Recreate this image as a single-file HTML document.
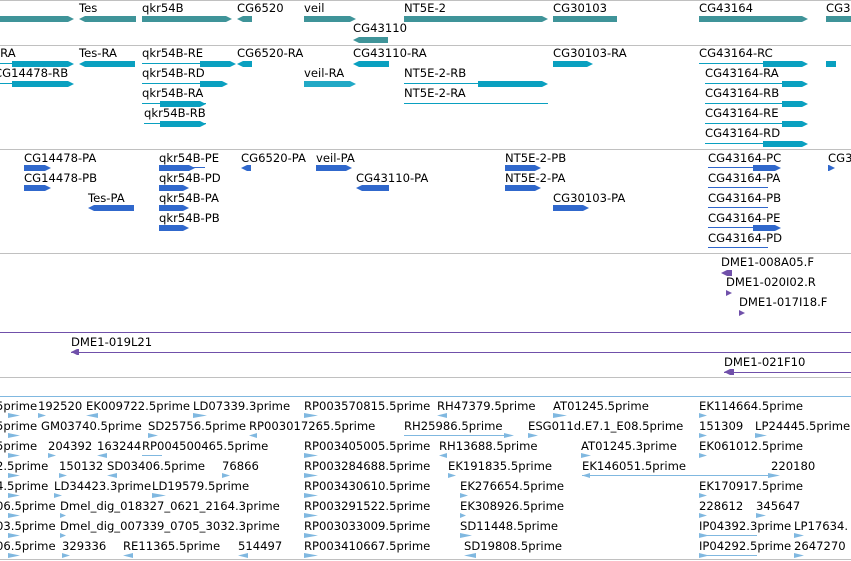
<!DOCTYPE html>
<html><head><meta charset="utf-8"><style>
body{margin:0;width:851px;height:561px;overflow:hidden;background:#fff;position:relative;font-family:"DejaVu Sans","Liberation Sans",sans-serif}
.t{position:absolute;font-size:11.6px;line-height:14px;white-space:nowrap;color:#000;margin-top:1px}
.b{position:absolute;height:6px}
.g{background:#3f9499}.r{background:#0aa0c0}.p{background:#3068cc}.c{background:#7050aa}.e{background:#80b8e0}
.h{position:absolute;height:1px}
.ar{clip-path:polygon(0 0,calc(100% - 6px) 0,100% 50%,calc(100% - 6px) 100%,0 100%)}
.al{clip-path:polygon(6px 0,100% 0,100% 100%,6px 100%,0 50%)}
.s{position:absolute;height:5px;width:8px;background:#80b8e0;clip-path:polygon(0 0,100% 50%,0 100%)}
.sl{position:absolute;height:5px;width:8px;background:#80b8e0;clip-path:polygon(100% 0,0 50%,100% 100%)}
</style></head><body>
<div class="h" style="top:0;left:0;width:851px;background:#c0c0c0"></div>
<div class="h" style="top:45px;left:0;width:851px;background:#c0c0c0"></div>
<div class="h" style="top:149px;left:0;width:851px;background:#c0c0c0"></div>
<div class="h" style="top:253px;left:0;width:851px;background:#c0c0c0"></div>
<div class="h" style="top:332px;left:0;width:851px;background:#7050aa"></div>
<div class="h" style="top:377px;left:0;width:851px;background:#c0c0c0"></div>
<div class="h" style="top:396px;left:0;width:851px;background:#80b8e0"></div>
<div class="h" style="top:559px;left:0;width:851px;background:#c0c0c0"></div>

<!-- genes -->
<div class="t" style="left:79px;top:0">Tes</div><div class="t" style="left:142px;top:0">qkr54B</div><div class="t" style="left:237px;top:0">CG6520</div><div class="t" style="left:304px;top:0">veil</div><div class="t" style="left:404px;top:0">NT5E-2</div><div class="t" style="left:553px;top:0">CG30103</div><div class="t" style="left:699px;top:0">CG43164</div><div class="t" style="left:826px;top:0">CG3</div>
<div class="t" style="left:353px;top:20px">CG43110</div>
<div class="b g ar" style="left:0;top:16px;width:74px"></div><div class="b g al" style="left:79px;top:16px;width:57px"></div><div class="b g ar" style="left:142px;top:16px;width:90px"></div><div class="b g al" style="left:237px;top:16px;width:15px"></div><div class="b g ar" style="left:304px;top:16px;width:52px"></div><div class="b g ar" style="left:404px;top:16px;width:144px"></div><div class="b g" style="left:553px;top:16px;width:64px"></div><div class="b g ar" style="left:699px;top:16px;width:109px"></div><div class="b g" style="left:826px;top:16px;width:25px"></div>
<div class="b g al" style="left:353px;top:37px;width:35px"></div>

<!-- transcripts -->
<div class="t" style="left:-4px;top:45px">-RA</div><div class="t" style="left:79px;top:45px">Tes-RA</div><div class="t" style="left:142px;top:45px">qkr54B-RE</div><div class="t" style="left:237px;top:45px">CG6520-RA</div><div class="t" style="left:353px;top:45px">CG43110-RA</div><div class="t" style="left:553px;top:45px">CG30103-RA</div><div class="t" style="left:699px;top:45px">CG43164-RC</div>
<div class="h r" style="left:0;top:63px;width:12px"></div><div class="b r ar" style="left:12px;top:61px;width:62px"></div><div class="b r al" style="left:79px;top:61px;width:56px"></div><div class="h r" style="left:142px;top:63px;width:60px"></div><div class="b r ar" style="left:200px;top:61px;width:36px"></div><div class="b r al" style="left:237px;top:61px;width:15px"></div><div class="b r al" style="left:353px;top:61px;width:36px"></div><div class="b r ar" style="left:553px;top:61px;width:40px"></div><div class="h r" style="left:699px;top:63px;width:80px"></div><div class="b r ar" style="left:763px;top:61px;width:45px"></div><div class="b r" style="left:826px;top:61px;width:10px"></div>
<div class="t" style="left:-6px;top:65px">CG14478-RB</div><div class="t" style="left:142px;top:65px">qkr54B-RD</div><div class="t" style="left:304px;top:65px">veil-RA</div><div class="t" style="left:404px;top:65px">NT5E-2-RB</div><div class="t" style="left:705px;top:65px">CG43164-RA</div>
<div class="h r" style="left:0;top:83px;width:12px"></div><div class="b r ar" style="left:12px;top:81px;width:62px"></div><div class="h r" style="left:142px;top:83px;width:60px"></div><div class="b r ar" style="left:200px;top:81px;width:28px"></div><div class="b r ar" style="left:304px;top:81px;width:52px;opacity:.9"></div><div class="h r" style="left:404px;top:83px;width:100px"></div><div class="b r ar" style="left:478px;top:81px;width:70px"></div><div class="h r" style="left:705px;top:83px;width:80px"></div><div class="b r ar" style="left:782px;top:81px;width:26px"></div>
<div class="t" style="left:142px;top:85px">qkr54B-RA</div><div class="t" style="left:404px;top:85px">NT5E-2-RA</div><div class="t" style="left:705px;top:85px">CG43164-RB</div>
<div class="h r" style="left:142px;top:103px;width:64px"></div><div class="b r ar" style="left:160px;top:101px;width:46px"></div><div class="h r" style="left:404px;top:103px;width:144px"></div><div class="h r" style="left:705px;top:103px;width:80px"></div><div class="b r ar" style="left:782px;top:101px;width:26px"></div>
<div class="t" style="left:144px;top:105px">qkr54B-RB</div><div class="t" style="left:705px;top:105px">CG43164-RE</div>
<div class="h r" style="left:144px;top:123px;width:62px"></div><div class="b r ar" style="left:160px;top:121px;width:46px"></div><div class="h r" style="left:705px;top:123px;width:80px"></div><div class="b r ar" style="left:782px;top:121px;width:26px"></div>
<div class="t" style="left:705px;top:125px">CG43164-RD</div>
<div class="h r" style="left:705px;top:143px;width:60px"></div><div class="b r ar" style="left:763px;top:141px;width:45px"></div>

<!-- proteins -->
<div class="t" style="left:24px;top:150px">CG14478-PA</div><div class="t" style="left:159px;top:150px">qkr54B-PE</div><div class="t" style="left:241px;top:150px">CG6520-PA</div><div class="t" style="left:316px;top:150px">veil-PA</div><div class="t" style="left:505px;top:150px">NT5E-2-PB</div><div class="t" style="left:708px;top:150px">CG43164-PC</div><div class="t" style="left:828px;top:150px">CG3</div>
<div class="b p ar" style="left:24px;top:165px;width:27px"></div><div class="h p" style="left:159px;top:167px;width:46px"></div><div class="b p ar" style="left:159px;top:165px;width:36px"></div><div class="b p al" style="left:241px;top:165px;width:10px"></div><div class="b p ar" style="left:316px;top:165px;width:36px"></div><div class="b p ar" style="left:505px;top:165px;width:36px"></div><div class="h p" style="left:708px;top:167px;width:60px"></div><div class="b p ar" style="left:753px;top:165px;width:28px"></div><div class="b p ar" style="left:828px;top:165px;width:7px"></div>
<div class="t" style="left:24px;top:170px">CG14478-PB</div><div class="t" style="left:159px;top:170px">qkr54B-PD</div><div class="t" style="left:356px;top:170px">CG43110-PA</div><div class="t" style="left:505px;top:170px">NT5E-2-PA</div><div class="t" style="left:708px;top:170px">CG43164-PA</div>
<div class="b p ar" style="left:24px;top:185px;width:27px"></div><div class="b p ar" style="left:159px;top:185px;width:30px"></div><div class="b p al" style="left:356px;top:185px;width:33px"></div><div class="b p ar" style="left:505px;top:185px;width:36px"></div><div class="h p" style="left:708px;top:187px;width:60px"></div>
<div class="t" style="left:88px;top:190px">Tes-PA</div><div class="t" style="left:159px;top:190px">qkr54B-PA</div><div class="t" style="left:553px;top:190px">CG30103-PA</div><div class="t" style="left:708px;top:190px">CG43164-PB</div>
<div class="b p al" style="left:88px;top:205px;width:46px"></div><div class="b p ar" style="left:159px;top:205px;width:30px"></div><div class="b p ar" style="left:553px;top:205px;width:36px"></div><div class="h p" style="left:708px;top:207px;width:60px"></div>
<div class="t" style="left:159px;top:210px">qkr54B-PB</div><div class="t" style="left:708px;top:210px">CG43164-PE</div>
<div class="b p ar" style="left:159px;top:225px;width:30px"></div><div class="h p" style="left:708px;top:227px;width:60px"></div><div class="b p ar" style="left:753px;top:225px;width:28px"></div>
<div class="t" style="left:708px;top:230px">CG43164-PD</div>
<div class="h p" style="left:708px;top:247px;width:60px"></div>

<!-- clones -->
<div class="t" style="left:721px;top:254px">DME1-008A05.F</div><div class="b c al" style="left:721px;top:270px;width:11px"></div>
<div class="t" style="left:726px;top:274px">DME1-020I02.R</div><div class="b c ar" style="left:726px;top:290px;width:6px"></div>
<div class="t" style="left:739px;top:294px">DME1-017I18.F</div><div class="b c ar" style="left:739px;top:310px;width:6px"></div>
<div class="t" style="left:71px;top:334px">DME1-019L21</div><div class="h c" style="left:71px;top:352px;width:780px"></div><div class="b c al" style="left:71px;top:349px;width:8px"></div>
<div class="t" style="left:724px;top:354px">DME1-021F10</div><div class="h c" style="left:724px;top:372px;width:127px"></div><div class="b c al" style="left:724px;top:369px;width:10px"></div>

<!-- ESTs -->
<div class="t" style="left:-4px;top:398px">5prime</div><div class="t" style="left:38px;top:398px">192520</div><div class="t" style="left:86px;top:398px">EK009722.5prime</div><div class="t" style="left:193px;top:398px">LD07339.3prime</div><div class="t" style="left:304px;top:398px">RP003570815.5prime</div><div class="t" style="left:437px;top:398px">RH47379.5prime</div><div class="t" style="left:553px;top:398px">AT01245.5prime</div><div class="t" style="left:699px;top:398px">EK114664.5prime</div>
<div class="t" style="left:-4px;top:418px">5prime</div><div class="t" style="left:41px;top:418px">GM03740.5prime</div><div class="t" style="left:148px;top:418px">SD25756.5prime</div><div class="t" style="left:249px;top:418px">RP003017265.5prime</div><div class="t" style="left:404px;top:418px">RH25986.5prime</div><div class="t" style="left:528px;top:418px">ESG011d.E7.1_E08.5prime</div><div class="t" style="left:699px;top:418px">151309</div><div class="t" style="left:755px;top:418px">LP24445.5prime</div>
<div class="t" style="left:-4px;top:438px">5prime</div><div class="t" style="left:48px;top:438px">204392</div><div class="t" style="left:97px;top:438px">163244</div><div class="t" style="left:142px;top:438px">RP004500465.5prime</div><div class="t" style="left:304px;top:438px">RP003405005.5prime</div><div class="t" style="left:439px;top:438px">RH13688.5prime</div><div class="t" style="left:581px;top:438px">AT01245.3prime</div><div class="t" style="left:699px;top:438px">EK061012.5prime</div>
<div class="t" style="left:-4px;top:458px">2.5prime</div><div class="t" style="left:59px;top:458px">150132</div><div class="t" style="left:107px;top:458px">SD03406.5prime</div><div class="t" style="left:222px;top:458px">76866</div><div class="t" style="left:304px;top:458px">RP003284688.5prime</div><div class="t" style="left:448px;top:458px">EK191835.5prime</div><div class="t" style="left:582px;top:458px">EK146051.5prime</div><div class="t" style="left:771px;top:458px">220180</div>
<div class="t" style="left:-4px;top:478px">4.5prime</div><div class="t" style="left:54px;top:478px">LD34423.3prime</div><div class="t" style="left:152px;top:478px">LD19579.5prime</div><div class="t" style="left:304px;top:478px">RP003430610.5prime</div><div class="t" style="left:460px;top:478px">EK276654.5prime</div><div class="t" style="left:699px;top:478px">EK170917.5prime</div>
<div class="t" style="left:-4px;top:498px">06.5prime</div><div class="t" style="left:60px;top:498px">Dmel_dig_018327_0621_2164.3prime</div><div class="t" style="left:304px;top:498px">RP003291522.5prime</div><div class="t" style="left:460px;top:498px">EK308926.5prime</div><div class="t" style="left:699px;top:498px">228612</div><div class="t" style="left:756px;top:498px">345647</div>
<div class="t" style="left:-4px;top:518px">03.5prime</div><div class="t" style="left:60px;top:518px">Dmel_dig_007339_0705_3032.3prime</div><div class="t" style="left:304px;top:518px">RP003033009.5prime</div><div class="t" style="left:460px;top:518px">SD11448.5prime</div><div class="t" style="left:699px;top:518px">IP04392.3prime</div><div class="t" style="left:794px;top:518px">LP17634.</div>
<div class="t" style="left:-4px;top:538px">06.5prime</div><div class="t" style="left:62px;top:538px">329336</div><div class="t" style="left:123px;top:538px">RE11365.5prime</div><div class="t" style="left:238px;top:538px">514497</div><div class="t" style="left:304px;top:538px">RP003410667.5prime</div><div class="t" style="left:464px;top:538px">SD19808.5prime</div><div class="t" style="left:699px;top:538px">IP04292.5prime</div><div class="t" style="left:794px;top:538px">2647270</div>

<!-- EST glyphs -->
<div class="s" style="left:8px;top:413px;width:12px"></div><div class="s" style="left:38px;top:413px"></div><div class="sl" style="left:86px;top:413px;width:12px"></div><div class="s" style="left:193px;top:413px;width:14px"></div><div class="s" style="left:304px;top:413px;width:14px"></div><div class="sl" style="left:437px;top:413px;width:10px"></div><div class="s" style="left:553px;top:413px;width:14px"></div><div class="s" style="left:699px;top:413px"></div>
<div class="s" style="left:8px;top:433px;width:12px"></div><div class="s" style="left:148px;top:433px;width:10px"></div><div class="sl" style="left:249px;top:433px"></div><div class="h e" style="left:404px;top:435px;width:100px"></div><div class="s" style="left:504px;top:433px;width:10px"></div><div class="s" style="left:528px;top:433px;width:10px"></div><div class="s" style="left:699px;top:433px"></div><div class="s" style="left:755px;top:433px;width:12px"></div>
<div class="s" style="left:8px;top:453px;width:12px"></div><div class="s" style="left:48px;top:453px"></div><div class="sl" style="left:97px;top:453px;width:10px"></div><div class="h e" style="left:142px;top:455px;width:20px"></div><div class="s" style="left:304px;top:453px;width:14px"></div><div class="sl" style="left:439px;top:453px"></div><div class="s" style="left:581px;top:453px;width:10px"></div><div class="s" style="left:699px;top:453px"></div>
<div class="s" style="left:8px;top:473px;width:12px"></div><div class="s" style="left:59px;top:473px"></div><div class="sl" style="left:107px;top:473px;width:10px"></div><div class="s" style="left:222px;top:473px"></div><div class="s" style="left:304px;top:473px;width:14px"></div><div class="s" style="left:448px;top:473px"></div><div class="h e" style="left:582px;top:475px;width:190px"></div><div class="sl" style="left:582px;top:473px"></div><div class="s" style="left:768px;top:473px;width:12px"></div>
<div class="s" style="left:8px;top:493px;width:12px"></div><div class="s" style="left:54px;top:493px"></div><div class="s" style="left:152px;top:493px;width:14px"></div><div class="s" style="left:304px;top:493px;width:14px"></div><div class="s" style="left:460px;top:493px"></div><div class="s" style="left:699px;top:493px"></div>
<div class="s" style="left:8px;top:513px;width:12px"></div><div class="s" style="left:60px;top:513px;width:6px"></div><div class="s" style="left:304px;top:513px;width:14px"></div><div class="s" style="left:460px;top:513px;width:6px"></div><div class="s" style="left:699px;top:513px"></div><div class="s" style="left:756px;top:513px;width:10px"></div>
<div class="s" style="left:8px;top:533px;width:12px"></div><div class="s" style="left:60px;top:533px;width:6px"></div><div class="s" style="left:304px;top:533px;width:14px"></div><div class="s" style="left:460px;top:533px;width:12px"></div><div class="h e" style="left:699px;top:535px;width:58px"></div><div class="s" style="left:699px;top:533px;width:10px"></div><div class="s" style="left:794px;top:533px;width:10px"></div>
<div class="s" style="left:8px;top:553px;width:12px"></div><div class="s" style="left:62px;top:553px"></div><div class="sl" style="left:123px;top:553px;width:10px"></div><div class="sl" style="left:238px;top:553px;width:10px"></div><div class="s" style="left:304px;top:553px;width:14px"></div><div class="sl" style="left:464px;top:553px;width:12px"></div><div class="h e" style="left:699px;top:555px;width:58px"></div><div class="s" style="left:699px;top:553px;width:10px"></div><div class="s" style="left:794px;top:553px;width:10px"></div>
</body></html>
